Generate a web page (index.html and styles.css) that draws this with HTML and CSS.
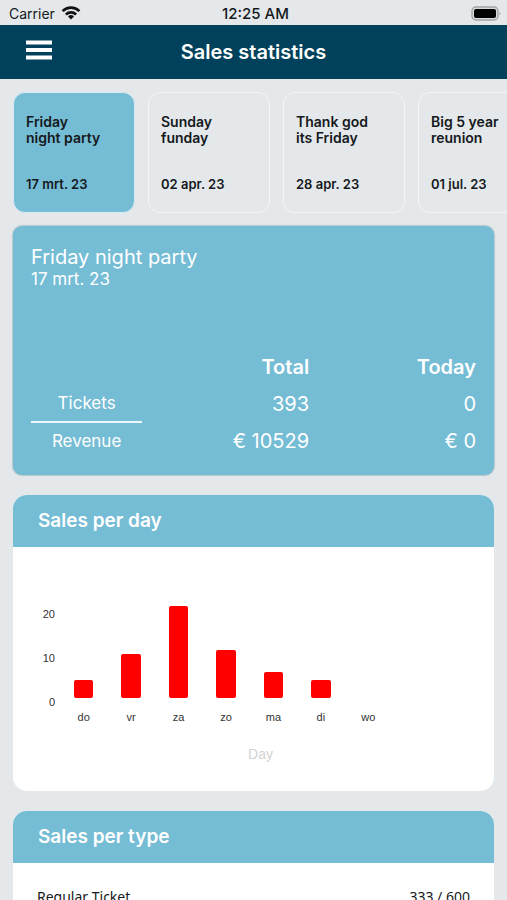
FILE: index.html
```html
<!DOCTYPE html>
<html lang="en">
<head>
<meta charset="utf-8">
<meta name="viewport" content="width=device-width, initial-scale=1">
<title>Sales statistics</title>
<link rel="stylesheet" href="styles.css">
</head>
<body>
<div class="status">
  <div class="carrier">
    <span>Carrier</span>
    <svg width="20" height="15" viewBox="0 0 20 15" fill="none" stroke="#111" stroke-width="2.7" aria-hidden="true">
      <path d="M1.600 5.100a12 12 0 0 1 16.800 0M4.900 8.500a7.300 7.300 0 0 1 10.200 0"/>
      <path d="M10 13.500 7 10.500a4.300 4.300 0 0 1 6 0z" fill="#111" stroke="none"/>
    </svg>
  </div>
  <span class="clock">12:25 AM</span>
  <svg class="battery" width="31" height="15" viewBox="0 0 31 15" aria-hidden="true">
    <rect x="1" y="1" width="26" height="13" rx="4" fill="#d8dbdc" stroke="#a2a5a7" stroke-width="1.4"/>
    <rect x="3" y="3" width="22" height="9" rx="2" fill="#000"/>
    <path d="M28.5 5.5q2 2 0 4z" fill="#a2a5a7"/>
  </svg>
</div>
<header class="bar">
  <button class="menu" aria-label="Menu">
    <svg width="26" height="20" viewBox="0 0 26 20" fill="#fff" aria-hidden="true"><path d="M0 0.500h26v4H0zM0 8h26v4H0zM0 15.500h26v4H0z"/></svg>
  </button>
  <h1>Sales statistics</h1>
</header>
<nav class="events">
  <button class="event active"><span class="name">Friday<br>night party</span><span>17 mrt. 23</span></button>
  <button class="event"><span class="name">Sunday<br>funday</span><span>02 apr. 23</span></button>
  <button class="event"><span class="name">Thank god<br>its Friday</span><span>28 apr. 23</span></button>
  <button class="event"><span class="name">Big 5 year<br>reunion</span><span>01 jul. 23</span></button>
</nav>
<main>
  <section class="summary">
    <div>
      <h2>Friday night party</h2>
      <p>17 mrt. 23</p>
    </div>
    <table>
      <thead><tr><td></td><th scope="col">Total</th><th scope="col">Today</th></tr></thead>
      <tbody>
        <tr><th scope="row">Tickets</th><td>393</td><td>0</td></tr>
        <tr><th scope="row">Revenue</th><td>€ 10529</td><td>€ 0</td></tr>
      </tbody>
    </table>
  </section>
  <section class="card">
    <h2>Sales per day</h2>
    <div class="chart">
      <div class="axis"><span>20</span><span>10</span><span>0</span></div>
      <div class="plot">
        <div class="bars">
          <i style="height:20%"></i><i style="height:50%"></i><i style="height:105%"></i><i style="height:55%"></i><i style="height:30%"></i><i style="height:20%"></i><i style="height:0%"></i>
        </div>
        <div class="days"><span>do</span><span>vr</span><span>za</span><span>zo</span><span>ma</span><span>di</span><span>wo</span></div>
      </div>
    </div>
    <p class="caption">Day</p>
  </section>
  <section class="card">
    <h2>Sales per type</h2>
    <div class="type"><span>Regular Ticket</span><span>333 / 600</span></div>
  </section>
</main>
</body>
</html>
```
FILE: styles.css
```css
* { box-sizing: border-box; }
html { scrollbar-width: none; }
body {
  margin: 0;
  background: #e4e8eb;
  font-family: Inter, "Liberation Sans", sans-serif;
  color: #15191c;
}
h1, h2, p { margin: 0; }
button { font: inherit; color: inherit; cursor: pointer; }

.status {
  display: grid;
  grid-template-columns: 1fr auto 1fr;
  align-items: center;
  height: 25px;
  padding: 2px 5px 0 9px;
  font-size: 14px;
}
.carrier { display: flex; align-items: center; gap: 6px; }
.clock { font-size: 15px; font-weight: 500; }
.battery { justify-self: end; }

.bar {
  display: grid;
  grid-template-columns: 1fr auto 1fr;
  align-items: center;
  height: 54px;
  padding: 0 26px;
  background: #01415b;
  color: #fff;
}
.bar h1 { font-size: 20px; font-weight: 600; }
.menu {
  justify-self: start;
  display: flex;
  padding: 0 0 4px;
  border: 0;
  background: none;
}

.events { display: flex; gap: 13px; padding: 13px; overflow: hidden; }
.event {
  flex: 0 0 122px;
  height: 121px;
  display: flex;
  flex-direction: column;
  justify-content: space-between;
  padding: 21px 12px 20px;
  border: 1px solid #f3f5f7;
  border-radius: 12px;
  background: none;
  text-align: left;
  font-size: 13px;
  line-height: 16px;
  font-weight: 600;
}
.name { font-size: 14px; }
.active { background: #75bcd5; border-color: #d5eaf2; }

main { display: flex; flex-direction: column; gap: 20px; padding: 0 13px 20px; }

.summary {
  display: flex;
  flex-direction: column;
  justify-content: space-between;
  min-height: 249px;
  padding: 19px 18px 16px;
  border-radius: 9px;
  background: #75bcd5;
  box-shadow: 0 0 1px 1px rgba(120, 150, 160, 0.4);
  color: #fff;
}
.summary h2 { font-size: 20px; line-height: 24px; font-weight: 400; }
.summary p { font-size: 17px; line-height: 21px; }
.summary table { width: 100%; table-layout: fixed; border-collapse: collapse; font-size: 20px; }
.summary td, .summary th { height: 37px; padding: 0; text-align: right; }
.summary thead th { font-weight: 600; }
.summary thead td { width: 25%; }
.summary tbody th { font-size: 17px; font-weight: 400; text-align: center; }
.summary tbody tr:first-child th { border-bottom: 2px solid #eef8fb; }

.card { border-radius: 14px; background: #fff; overflow: hidden; }
.card h2 {
  padding: 0 25px;
  background: #75bcd5;
  color: #fff;
  font-size: 19px;
  line-height: 52px;
  font-weight: 600;
}
.chart {
  display: grid;
  grid-template-columns: 24px 1fr;
  gap: 5px;
  padding: 61px 102px 0 18px;
  font: 11px/12px "Liberation Sans", sans-serif;
  color: #333;
}
.axis {
  display: flex;
  flex-direction: column;
  justify-content: space-between;
  height: 100px;
  text-align: right;
}
.plot { padding-top: 2px; }
.bars { display: flex; align-items: flex-end; height: 88px; }
.bars i {
  flex: 1;
  border-radius: 2px;
  margin: 0 14px;
  background: #f00;
}
.days { display: flex; padding-top: 13px; }
.days span { flex: 1; text-align: center; }
.caption {
  padding: 23px 0 28px 14px;
  text-align: center;
  font: 14px/17px "Liberation Sans", sans-serif;
  color: #d3d3d3;
}
.type {
  display: flex;
  justify-content: space-between;
  padding: 24px;
  font: 14px/20px "Noto Sans", sans-serif;
}
```
